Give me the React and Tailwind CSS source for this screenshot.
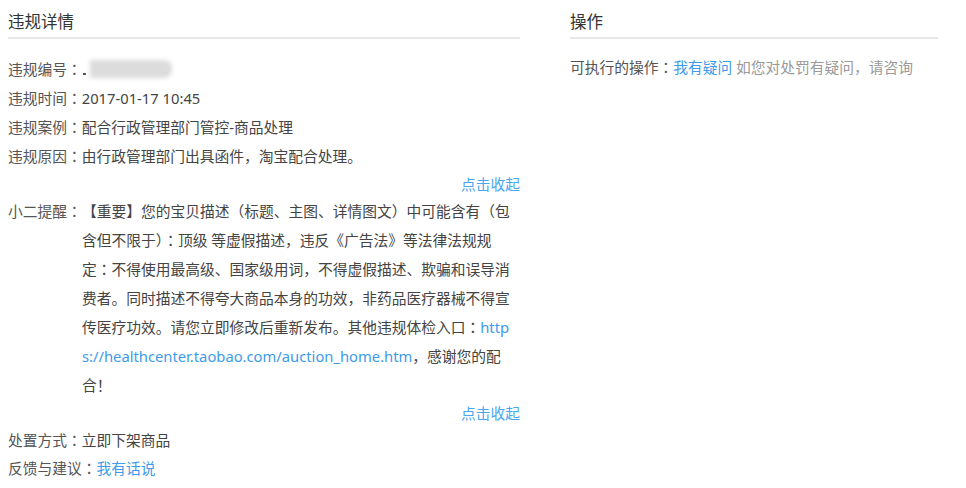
import React from "react";

function C() {
  return <span className="leading-[0] font-['Noto_Sans_CJK_JP',sans-serif]">：</span>;
}

function Row({ label, children, h = "h-[29px] leading-[29px]" }) {
  return (
    <div className={`${h} whitespace-nowrap`}>
      <span className="text-[#555]">
        {label}
        <C />
      </span>
      <span className="text-[#444]">{children}</span>
    </div>
  );
}

function Collapse({ h }) {
  return (
    <div className={`${h} text-right text-[#4aa6ee] whitespace-nowrap`}>点击收起</div>
  );
}

export default function App() {
  const lines = [
    <>【重要】您的宝贝描述（标题、主图、详情图文）中可能含有（包</>,
    <>
      含但不限于）
      <C />
      顶级 等虚假描述，违反《广告法》等法律法规规
    </>,
    <>
      定
      <C />
      不得使用最高级、国家级用词，不得虚假描述、欺骗和误导消
    </>,
    <>费者。同时描述不得夸大商品本身的功效，非药品医疗器械不得宣</>,
    <>
      传医疗功效。请您立即修改后重新发布。其他违规体检入口
      <C />
      <span className="text-[#3d9be9]">http</span>
    </>,
    <>
      <span className="text-[#3d9be9]">s://healthcenter.taobao.com/auction_home.htm</span>，感谢您的配
    </>,
    <>合！</>,
  ];
  return (
    <div className="w-[966px] h-[488px] bg-white overflow-hidden flex gap-[50px] pl-[8px] text-[14.75px] font-['Noto_Sans','Noto_Sans_CJK_SC',sans-serif]">
      <div className="w-[512px] flex flex-col">
        <div className="pt-[10px] pb-[3px] border-b-2 border-[#e8e8e8]">
          <div className="text-[16.5px] leading-[24px] text-[#333]">违规详情</div>
        </div>
        <div className="mt-[16px] flex flex-col">
          <Row label="违规编号">
            <span className="relative inline-block w-[90px] h-[16px] align-middle">
              <span className="absolute left-[1px] top-[10px] w-[3px] h-[2px] bg-[#555]"></span>
              <span className="absolute left-[8px] top-[-3px] w-[82px] h-[18px] bg-[#dcdcdc] blur-[2px] rounded-r-[8px]"></span>
            </span>
          </Row>
          <Row label="违规时间">2017-01-17 10:45</Row>
          <Row label="违规案例">配合行政管理部门管控-商品处理</Row>
          <Row label="违规原因">由行政管理部门出具函件，淘宝配合处理。</Row>
          <Collapse h="h-[26px] leading-[26px]" />
          <div className="flex leading-[29px]">
            <span className="text-[#555] whitespace-nowrap w-[74px] shrink-0 h-[29px]">
              小二提醒
              <C />
            </span>
            <div className="text-[#444] flex flex-col">
              {lines.map((l, i) => (
                <div key={i} className="whitespace-nowrap h-[29px]">
                  {l}
                </div>
              ))}
            </div>
          </div>
          <Collapse h="h-[27px] leading-[27px]" />
          <Row label="处置方式" h="h-[27px] leading-[27px]">
            立即下架商品
          </Row>
          <Row label="反馈与建议">
            <span className="text-[#3d9be9]">我有话说</span>
          </Row>
        </div>
      </div>
      <div className="w-[368px] flex flex-col">
        <div className="pt-[10px] pb-[3px] border-b-2 border-[#e8e8e8]">
          <div className="text-[16.5px] leading-[24px] text-[#333]">操作</div>
        </div>
        <div className="mt-[14px] h-[29px] leading-[29px] whitespace-nowrap">
          <span className="text-[#555]">
            可执行的操作
            <C />
          </span>
          <span className="text-[#3d9be9]">我有疑问</span>
          <span className="text-[#999]"> 如您对处罚有疑问，请咨询</span>
        </div>
      </div>
    </div>
  );
}
